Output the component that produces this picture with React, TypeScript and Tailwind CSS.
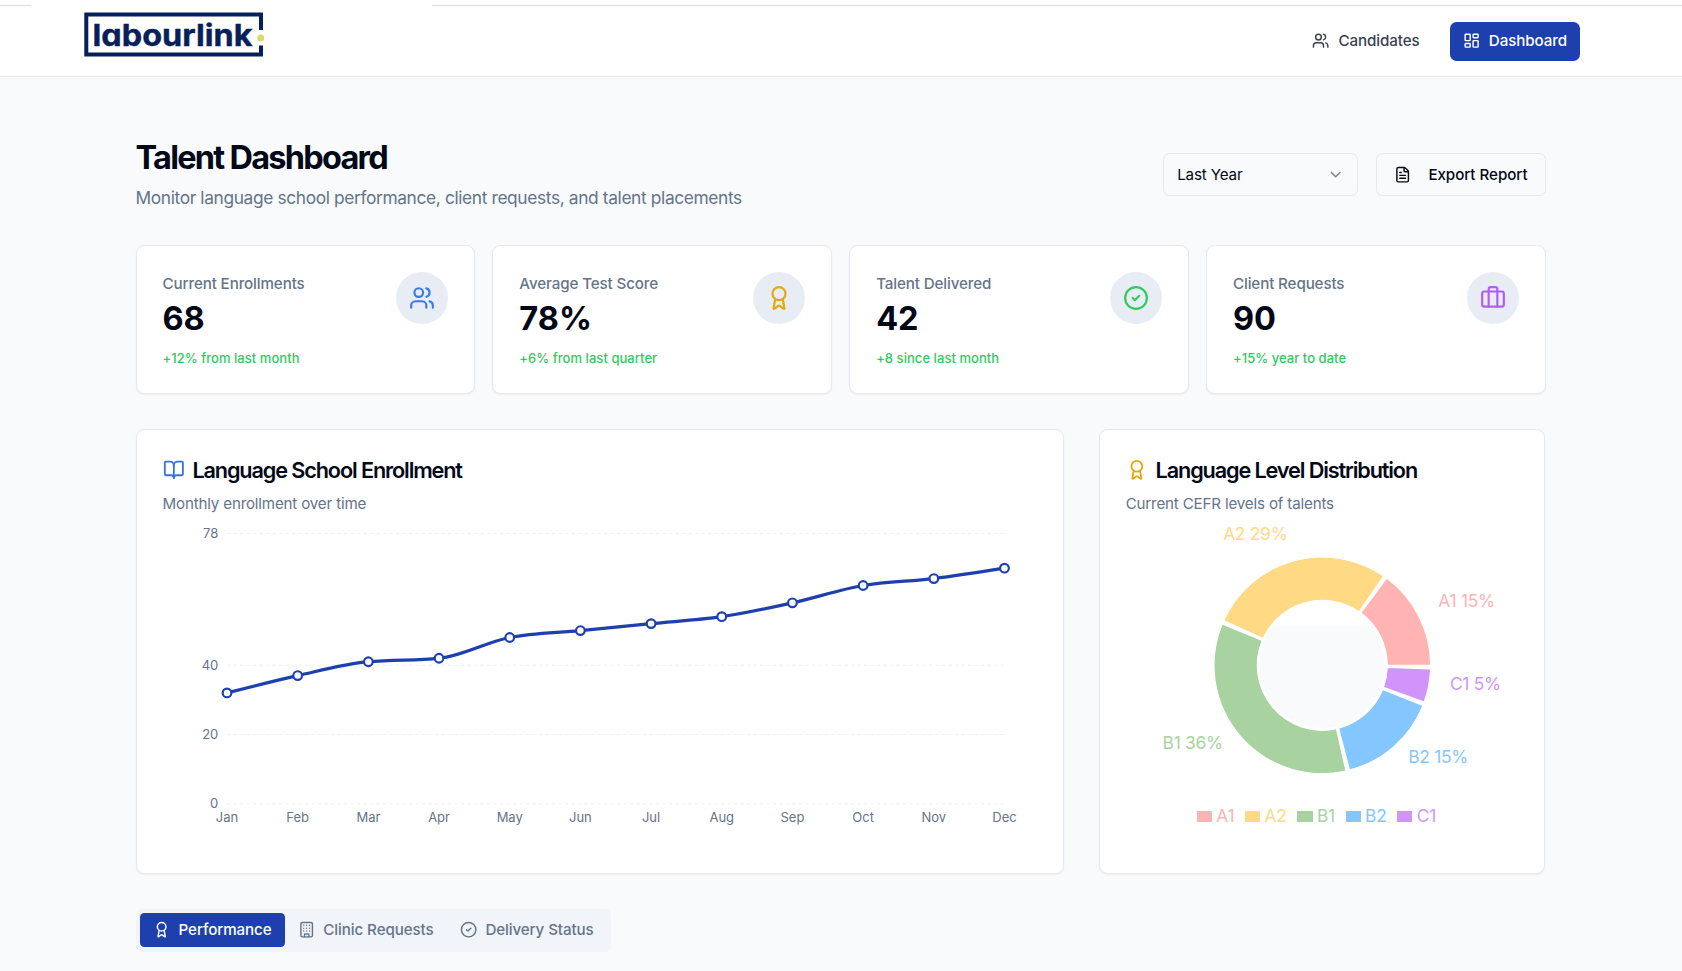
import React from 'react';
import {
  Award,
  BookOpen,
  Briefcase,
  Building,
  ChevronDown,
  CircleCheck,
  FileText,
  LayoutDashboard,
  Users,
} from 'lucide-react';

const stats = [
  { label: 'Current Enrollments', value: '68', change: '+12% from last month', icon: Users, color: 'text-[#3b7ae8]' },
  { label: 'Average Test Score', value: '78%', change: '+6% from last quarter', icon: Award, color: 'text-[#e5a80d]' },
  { label: 'Talent Delivered', value: '42', change: '+8 since last month', icon: CircleCheck, color: 'text-[#2fcb5f]' },
  { label: 'Client Requests', value: '90', change: '+15% year to date', icon: Briefcase, color: 'text-[#b25cf8]' },
];

const enrollment = [
  { month: 'Jan', value: 32 },
  { month: 'Feb', value: 37 },
  { month: 'Mar', value: 41 },
  { month: 'Apr', value: 42 },
  { month: 'May', value: 48 },
  { month: 'Jun', value: 50 },
  { month: 'Jul', value: 52 },
  { month: 'Aug', value: 54 },
  { month: 'Sep', value: 58 },
  { month: 'Oct', value: 63 },
  { month: 'Nov', value: 65 },
  { month: 'Dec', value: 68 },
];

const levels = [
  { name: 'A1', value: 15, color: '#ffb3b3' },
  { name: 'A2', value: 28, color: '#ffd983' },
  { name: 'B1', value: 35, color: '#a8d3a0' },
  { name: 'B2', value: 15, color: '#84c7ff' },
  { name: 'C1', value: 5, color: '#d094fb' },
];

const tabs = [
  { label: 'Performance', icon: Award, active: true },
  { label: 'Clinic Requests', icon: Building, active: false },
  { label: 'Delivery Status', icon: CircleCheck, active: false },
];

function Logo() {
  return (
    <svg width="182" height="46" viewBox="0 0 182 46" className="block">
      <path d="M177 18V2.5H2.3V42.6H177V33.5" fill="none" stroke="#06205a" strokeWidth="4" />
      <text
        x="8.5"
        y="34"
        textLength="160"
        lengthAdjust="spacingAndGlyphs"
        fill="#06205a"
        stroke="#06205a"
        strokeWidth="0.4"
        fontSize="30.5"
        fontWeight="700"
        style={{ fontFeatureSettings: '"cv11"' }}
      >
        labourlink
      </text>
      <circle cx="176.7" cy="26" r="3.5" fill="#dcd96c" />
    </svg>
  );
}

// Monotone cubic interpolation, same shape as d3's curveMonotoneX
function monotonePath(pts: [number, number][]) {
  const n = pts.length;
  const slopes: number[] = [];
  for (let i = 0; i < n - 1; i++) {
    slopes.push((pts[i + 1][1] - pts[i][1]) / (pts[i + 1][0] - pts[i][0]));
  }
  const t = pts.map((_, i) => {
    if (i === 0 || i === n - 1) return 0;
    const a = slopes[i - 1];
    const b = slopes[i];
    if (a * b <= 0) return 0;
    return Math.sign(a) * 2 * Math.min(Math.abs(a), Math.abs(b), Math.abs(a + b) / 4);
  });
  t[0] = (3 * slopes[0] - t[1]) / 2;
  t[n - 1] = (3 * slopes[n - 2] - t[n - 2]) / 2;

  let d = `M${pts[0][0]},${pts[0][1]}`;
  for (let i = 0; i < n - 1; i++) {
    const [x0, y0] = pts[i];
    const [x1, y1] = pts[i + 1];
    const dx = (x1 - x0) / 3;
    d += `C${x0 + dx},${y0 + dx * t[i]},${x1 - dx},${y1 - dx * t[i + 1]},${x1},${y1}`;
  }
  return d;
}

function EnrollmentChart() {
  const left = 64;
  const step = 70.68;
  const bottom = 287.8;
  const y = (v: number) => bottom - v * 3.465;
  const points = enrollment.map((d, i) => [left + i * step, y(d.value)] as [number, number]);

  return (
    <svg width="874" height="325" viewBox="0 0 874 325" className="block">
      {[0, 20, 40, 78].map((tick) => (
        <g key={tick}>
          <line
            x1={left}
            x2={left + step * 11}
            y1={y(tick)}
            y2={y(tick)}
            stroke="#f0f0f2"
            strokeWidth="1.08"
            strokeDasharray="3.25 3.25"
          />
          <text x={left - 8.7} y={y(tick) + 4.6} textAnchor="end" fontSize="13" fill="#64748b">
            {tick}
          </text>
        </g>
      ))}
      <path d={monotonePath(points)} fill="none" stroke="#1e40af" strokeWidth="3.25" />
      {points.map(([px, py], i) => (
        <circle key={i} cx={px} cy={py} r="4.33" fill="#fff" stroke="#1e40af" strokeWidth="2.17" />
      ))}
      {enrollment.map((d, i) => (
        <text key={d.month} x={left + i * step} y={306} textAnchor="middle" fontSize="13" fill="#64748b">
          {d.month}
        </text>
      ))}
    </svg>
  );
}

function LevelChart() {
  const cx = 196.3;
  const cy = 149.3;
  const outer = 108.3;
  const inner = 65;
  const gap = 2;
  const total = levels.reduce((sum, l) => sum + l.value, 0);
  const point = (r: number, deg: number) => {
    const a = (deg * Math.PI) / 180;
    return [cx + r * Math.cos(a), cy - r * Math.sin(a)];
  };

  let angle = 0;
  const sectors = levels.map((l) => {
    const start = angle;
    const end = start + (l.value / total) * (360 - gap * levels.length);
    angle = end + gap;
    const large = end - start > 180 ? 1 : 0;
    const [ax, ay] = point(outer, start);
    const [bx, by] = point(outer, end);
    const [ex, ey] = point(inner, end);
    const [fx, fy] = point(inner, start);
    const [lx, ly] = point(outer + 21.7, (start + end) / 2);
    return {
      ...l,
      d: `M${ax},${ay}A${outer},${outer},0,${large},0,${bx},${by}L${ex},${ey}A${inner},${inner},0,${large},1,${fx},${fy}Z`,
      lx,
      ly,
      percent: Math.round((l.value / total) * 100),
    };
  });

  return (
    <svg width="394" height="282" viewBox="0 0 394 282" className="block overflow-visible">
      <path d="M146.6 110.3H246A63 63 0 1 1 146.6 110.3Z" fill="#f9fafc" />
      {sectors.map((s) => (
        <g key={s.name}>
          <path d={s.d} fill={s.color} stroke="#fff" strokeWidth="1.08" />
          <text
            x={s.lx}
            y={s.ly + 0.4}
            textAnchor={s.lx > cx ? 'start' : 'end'}
            fontSize="17.33"
            letterSpacing="-0.25"
            fill={s.color}
          >
            {s.name} {s.percent}%
          </text>
        </g>
      ))}
    </svg>
  );
}

export default function App() {
  return (
    <div className="h-[971px] overflow-hidden bg-[#f8fafc] font-['Inter',sans-serif] text-[#020817]">
      {/* Header */}
      <header className="flex h-[77px] flex-col border-b border-[#e4e8f1] bg-white">
        <div className="flex h-[6px] shrink-0 items-end justify-between">
          <div className="h-px w-[31px] bg-[#dddddd]" />
          <div className="h-px w-[1250px] bg-[#dddddd]" />
        </div>
        <div className="flex flex-1 items-start justify-between pr-[102px] pl-[84px]">
          <div className="pt-[6px]">
            <Logo />
          </div>
          <nav className="flex gap-[17.3px] pt-[15.5px] text-[15.17px] font-medium tracking-[-0.1px]">
            <a className="flex h-[39px] items-center gap-[8.7px] px-[13px] text-[#374151]">
              <Users className="size-[17.3px]" />
              Candidates
            </a>
            <a className="flex h-[39px] items-center gap-[8.7px] rounded-[6.5px] bg-[#1e40af] px-[13px] text-white">
              <LayoutDashboard className="size-[17.3px]" />
              Dashboard
            </a>
          </nav>
        </div>
      </header>

      <main className="pt-[61px] pr-[136.5px] pl-[135.5px]">
        {/* Title row */}
        <div className="flex items-center justify-between">
          <div>
            <h1 className="text-[32.5px] leading-[39px] font-bold tracking-[-1.75px]">Talent Dashboard</h1>
            <p className="mt-[8px] text-[17.33px] leading-[26px] tracking-[-0.365px] text-[#64748b]">
              Monitor language school performance, client requests, and talent placements
            </p>
          </div>
          <div className="flex gap-[17.3px] text-[15.17px]">
            <button className="flex h-[43.3px] w-[195px] items-center justify-between rounded-[6.5px] border border-[#e4e8f1] px-[13px] pt-px tracking-[-0.15px]">
              Last Year
              <ChevronDown className="size-[17.3px] opacity-50" />
            </button>
            <button className="flex h-[43.3px] w-[170px] items-center gap-[17.3px] rounded-[6.5px] border border-[#e4e8f1] px-[17.3px] pt-px font-medium tracking-[-0.05px] whitespace-nowrap">
              <FileText className="size-[17.3px] shrink-0" />
              Export Report
            </button>
          </div>
        </div>

        {/* Stat cards */}
        <div className="mt-[34px] grid grid-cols-4 gap-[17.3px]">
          {stats.map((s) => (
            <div
              key={s.label}
              className="flex h-[149px] items-start justify-between rounded-[8.7px] border border-[#e4e8f1] bg-white p-[26px] shadow-xs"
            >
              <div>
                <p className="pt-px text-[15.17px] leading-[21.7px] font-medium tracking-[-0.12px] text-[#64748b]">
                  {s.label}
                </p>
                <p className="mt-[4px] text-[32.5px] leading-[39px] font-bold">{s.value}</p>
                <p className="mt-[12px] text-[13px] leading-[17.3px] font-medium tracking-[0.05px] text-[#2fcb5f]">
                  {s.change}
                </p>
              </div>
              <div className="flex size-[52px] items-center justify-center rounded-full bg-[#e8ecf5]">
                <s.icon className={`size-[26px] ${s.color}`} />
              </div>
            </div>
          ))}
        </div>

        {/* Charts */}
        <div className="mt-[35px] flex gap-[34.7px]">
          <section className="h-[445px] w-[928.5px] rounded-[8.7px] border border-[#e4e8f1] bg-white px-[26px] pt-[25px] shadow-xs">
            <h2 className="flex items-center gap-[8.2px] text-[21.67px] leading-[30px] font-semibold tracking-[-1.12px]">
              <BookOpen className="size-[21.7px] text-[#3b6fe0]" />
              Language School Enrollment
            </h2>
            <p className="mt-[8px] text-[15.17px] leading-[21.7px] tracking-[-0.18px] text-[#64748b]">
              Monthly enrollment over time
            </p>
            <div className="mt-[1px]">
              <EnrollmentChart />
            </div>
          </section>

          <section className="h-[445px] w-[446.3px] rounded-[8.7px] border border-[#e4e8f1] bg-white px-[26px] pt-[25px] shadow-xs">
            <h2 className="flex items-center gap-[8.2px] text-[21.67px] leading-[30px] font-semibold tracking-[-1.12px]">
              <Award className="size-[21.7px] text-[#e5a80d]" />
              Language Level Distribution
            </h2>
            <p className="mt-[8px] text-[15.17px] leading-[21.7px] tracking-[-0.18px] text-[#64748b]">
              Current CEFR levels of talents
            </p>
            <div className="mt-[1px]">
              <LevelChart />
            </div>
            <ul className="mt-[5.5px] flex gap-[10.8px] pl-[71.2px] text-[17.33px] leading-[26px] tracking-[-0.25px]">
              {levels.map((l) => (
                <li key={l.name} className="flex items-center gap-[4.3px]" style={{ color: l.color }}>
                  <span className="h-[11.4px] w-[15.2px] bg-current" />
                  {l.name}
                </li>
              ))}
            </ul>
          </section>
        </div>

        {/* Tabs */}
        <div className="mt-[34.5px] inline-flex h-[43.3px] items-center rounded-[6.5px] bg-[#f1f5f9] p-[4.3px] text-[15.17px] font-medium tracking-[-0.1px] text-[#64748b]">
          {tabs.map((t) => (
            <button
              key={t.label}
              className={`flex h-[34.7px] items-center gap-[8.5px] rounded-[4.3px] px-[13px] whitespace-nowrap ${
                t.active ? 'bg-[#1e40af] text-white' : ''
              }`}
            >
              <t.icon className="size-[17.3px]" />
              {t.label}
            </button>
          ))}
        </div>
      </main>
    </div>
  );
}
